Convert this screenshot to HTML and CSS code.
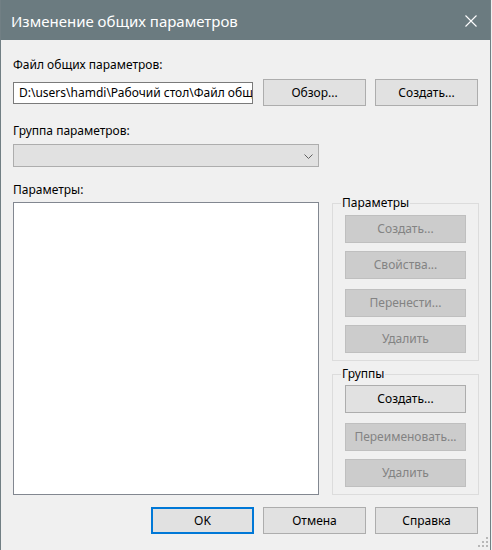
FILE: index.html
```html
<!DOCTYPE html>
<html lang="ru">
<head>
<meta charset="utf-8">
<title>Изменение общих параметров</title>
<link rel="stylesheet" href="styles.css">
</head>
<body>
<div class="window">
  <div class="titlebar">
    <span class="title">Изменение общих параметров</span>
    <svg class="close" width="12" height="12" viewBox="0 0 12 12"><path d="M0.5 0.5 L11.5 11.5 M11.5 0.5 L0.5 11.5" stroke="#ffffff" stroke-width="1.1" fill="none"/></svg>
  </div>
  <div class="content">
    <div class="label label-file">Файл общих параметров:</div>
    <div class="file-row">
      <input class="textbox" type="text" readonly value="D:\users\hamdi\Рабочий стол\Файл общих параметров.txt">
      <button class="btn">Обзор...</button>
      <button class="btn">Создать...</button>
    </div>
    <div class="label label-group">Группа параметров:</div>
    <div class="combo">
      <svg class="chevron" width="9" height="5" viewBox="0 0 9 5"><path d="M0.5 0.5 L4.5 4.5 L8.5 0.5" stroke="#606060" stroke-width="1" fill="none"/></svg>
    </div>
    <div class="main">
      <div class="left-col">
        <div class="label label-params">Параметры:</div>
        <div class="listbox"></div>
      </div>
      <div class="right-col">
        <fieldset class="group group-params">
          <legend>Параметры</legend>
          <button class="btn btn-group disabled">Создать...</button>
          <button class="btn btn-group disabled gap8">Свойства...</button>
          <button class="btn btn-group disabled gap10">Перенести...</button>
          <button class="btn btn-group disabled gap8">Удалить</button>
        </fieldset>
        <fieldset class="group group-groups">
          <legend>Группы</legend>
          <button class="btn btn-group">Создать...</button>
          <button class="btn btn-group disabled gap10">Переименовать...</button>
          <button class="btn btn-group disabled gap8">Удалить</button>
        </fieldset>
      </div>
    </div>
    <div class="footer">
      <button class="btn btn-default">OK</button>
      <button class="btn">Отмена</button>
      <button class="btn">Справка</button>
    </div>
  </div>
  <svg class="grip" width="11" height="11" viewBox="0 0 11 11">
    <g fill="#b8b8b8">
      <rect x="8" y="0" width="2" height="2"/>
      <rect x="4" y="4" width="2" height="2"/><rect x="8" y="4" width="2" height="2"/>
      <rect x="0" y="8" width="2" height="2"/><rect x="4" y="8" width="2" height="2"/><rect x="8" y="8" width="2" height="2"/>
    </g>
  </svg>
</div>
</body>
</html>
```

FILE: styles.css
```css
html, body {
  margin: 0;
  padding: 0;
  background: #f0f0f0;
}

body {
  font-family: "Segoe UI", "Noto Sans", "DejaVu Sans", sans-serif;
  font-size: 12px;
  color: #000000;
}

.window {
  position: relative;
  width: 491px;
  height: 550px;
  box-sizing: border-box;
  border-left: 1px solid #717f84;
  border-right: 1px solid #717f84;
  background: #f0f0f0;
  overflow: hidden;
}

.titlebar {
  height: 40px;
  background: #6b7b80;
  display: flex;
  align-items: center;
  justify-content: space-between;
  padding: 0 13px 0 10px;
}

.title {
  color: #ffffff;
  font-size: 15px;
  padding-top: 2px;
}

.close {
  display: block;
  margin-top: 2px;
}

.content {
  padding: 0 11px 0 12px;
  display: flex;
  flex-direction: column;
}

.label {
  line-height: 16px;
  height: 16px;
  white-space: nowrap;
}

.label-file {
  margin-top: 17px;
}

.file-row {
  margin-top: 6px;
  display: flex;
  align-items: center;
  height: 27px;
}

.textbox {
  width: 240px;
  height: 22px;
  box-sizing: border-box;
  border: 1px solid #7a7a7a;
  border-radius: 0;
  background: #ffffff;
  font-family: inherit;
  font-size: 12px;
  color: #000000;
  line-height: 20px;
  padding: 0 0 0 5px;
  margin: 0;
  outline: none;
}

.btn {
  font-family: inherit;
  font-size: 12px;
  color: #000000;
  background: #e1e1e1;
  border: 1px solid #adadad;
  border-radius: 0;
  width: 103px;
  height: 27px;
  box-sizing: border-box;
  padding: 0;
  margin: 0;
  line-height: 16px;
  display: block;
}

.file-row .textbox + .btn {
  margin-left: 10px;
}

.file-row .btn + .btn {
  margin-left: 9px;
}

.label-group {
  margin-top: 17px;
}

.combo {
  margin-top: 5px;
  width: 306px;
  height: 23px;
  box-sizing: border-box;
  border: 1px solid #adadad;
  background: #e1e1e1;
  display: flex;
  align-items: center;
  justify-content: flex-end;
  padding-right: 5px;
}

.chevron {
  display: block;
  margin-top: 1px;
}

.main {
  display: flex;
  gap: 13px;
}

.left-col {
  width: 306px;
  display: flex;
  flex-direction: column;
}

.label-params {
  margin-top: 15px;
}

.listbox {
  margin-top: 4px;
  height: 293px;
  box-sizing: border-box;
  border: 1px solid #828790;
  background: #ffffff;
}

.right-col {
  width: 147px;
  margin-top: 28px;
  display: flex;
  flex-direction: column;
}

.group {
  margin: 0;
  border: 1px solid #dcdcdc;
  padding: 4px 12px 7px 12px;
  min-width: 0;
}

.group legend {
  padding: 0 1px;
  margin-left: -4px;
  line-height: 16px;
  font-size: 12px;
}

.group-groups {
  margin-top: 5px;
  padding-top: 3px;
}

.btn-group {
  width: 121px;
  height: 28px;
}

.gap8 {
  margin-top: 8px;
}

.gap10 {
  margin-top: 10px;
}

.btn.disabled {
  background: #cccccc;
  border-color: #bfbfbf;
  color: #838383;
}

.footer {
  margin-top: 12px;
  display: flex;
  justify-content: flex-end;
  gap: 9px;
  padding-right: 1px;
}

.btn-default {
  border: 2px solid #0078d7;
}

.grip {
  position: absolute;
  right: 1px;
  bottom: 2px;
  display: block;
}
```
